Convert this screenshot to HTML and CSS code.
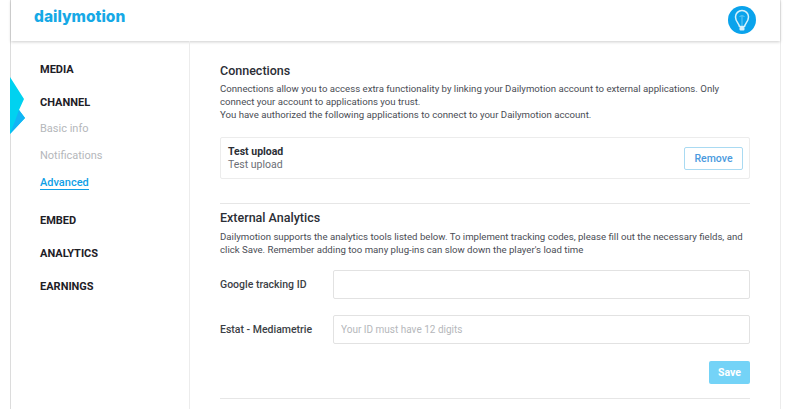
FILE: index.html
```html
<!DOCTYPE html>
<html lang="en">
<head>
<meta charset="utf-8">
<title>Dailymotion – Advanced</title>
<link rel="stylesheet" href="styles.css">
</head>
<body>
<div class="shell">
  <header class="topbar">
    <span class="logo">dailymotion</span>
    <svg class="bulb" viewBox="0 0 28 28" width="28" height="28" aria-hidden="true">
      <circle cx="14" cy="14" r="14" fill="#0aa3ec"/>
      <path d="M11.400 20.500c-.3-3-3.900-5-3.900-9.500a6.500 6.500 0 0 1 13 0c0 4.500-3.600 6.500-3.900 9.500z" fill="none" stroke="#d5f1fc" stroke-width="1.500" stroke-linejoin="round"/>
      <path d="M11.500 10.500q2.500-1.800 5 0M14 10v10" fill="none" stroke="#7fd0f4" stroke-width=".8"/>
      <rect x="11.500" y="21" width="5" height="3.400" rx="1" fill="#d5f1fc"/>
    </svg>
  </header>
  <div class="body">
    <svg class="marker" viewBox="0 0 16 57" width="16" height="57" aria-hidden="true">
      <path d="M0 0L14 22L9 33L15 41L0 57z" fill="#00d2f0"/>
      <path d="M9 33L15 41L0 57L5 44z" fill="#12b4f5"/>
    </svg>
    <nav class="side">
      <a class="head first">MEDIA</a>
      <a class="head">CHANNEL</a>
      <a class="sub one">Basic info</a>
      <a class="sub two">Notifications</a>
      <a class="sub active">Advanced</a>
      <a class="head embed">EMBED</a>
      <a class="head">ANALYTICS</a>
      <a class="head">EARNINGS</a>
    </nav>
    <main class="content">
      <h2>Connections</h2>
      <p class="text">Connections allow you to access extra functionality by linking your Dailymotion account to external applications. Only connect your account to applications you trust.<br>You have authorized the following applications to connect to your Dailymotion account.</p>
      <div class="app">
        <div class="app-text"><strong>Test upload</strong><span>Test upload</span></div>
        <button class="remove" type="button">Remove</button>
      </div>
      <hr class="rule first-rule">
      <h2>External Analytics</h2>
      <p class="text lower">Dailymotion supports the analytics tools listed below. To implement tracking codes, please fill out the necessary fields, and click Save. Remember adding too many plug-ins can slow down the player's load time</p>
      <div class="field google">
        <label for="ga">Google tracking ID</label>
        <input id="ga" type="text">
      </div>
      <div class="field">
        <label for="estat">Estat - Mediametrie</label>
        <input id="estat" type="text" placeholder="Your ID must have 12 digits">
      </div>
      <div class="actions"><button class="save" type="button">Save</button></div>
      <hr class="rule">
    </main>
  </div>
</div>
</body>
</html>
```
FILE: styles.css
```css
* { box-sizing: border-box; }
html, body { margin: 0; height: 409px; overflow: hidden; background: #fff; }
body { font-family: "Roboto", "Liberation Sans", sans-serif; color: #4a4d55; }
.shell { margin-left: 10px; width: 771px; height: 409px; border-left: 1px solid #dcdcdc; border-right: 1px solid #ececec; }
.topbar { height: 41px; display: flex; align-items: center; justify-content: space-between; padding: 0 24px 0 23px; background: #fff; box-shadow: 0 1px 3px rgba(0,0,0,.2); position: relative; }
.logo { font-family: "Inter", sans-serif; font-size: 15.500px; font-weight: 800; color: #16a9e6; position: relative; top: -4px; }
.bulb { position: relative; top: -1px; }
.body { display: flex; position: relative; height: 368px; }
.marker { position: absolute; left: -1px; top: 36px; }
.side { width: 179px; border-right: 1px solid #ececec; padding: 22px 0 0 29px; display: flex; flex-direction: column; align-items: flex-start; }
.side a { display: block; line-height: 14px; }
.head { font-size: 11px; font-weight: 700; color: #1d2026; margin-bottom: 19px; }
.sub { font-size: 11px; color: #b5b7bb; }
.one { margin-top: -7px; }
.two { margin-top: 13px; }
.active { margin-top: 13px; color: #0f9fe6; font-weight: 500; border-bottom: 1px solid #0f9fe6; line-height: 13px !important; }
.embed { margin-top: 24px; }
.content { width: 530px; margin-left: 30px; padding-top: 22px; }
h2 { margin: 0; font-size: 12.500px; line-height: 15px; font-weight: 500; color: #2b2e35; }
.text { margin: 4px 0 0; font-size: 9.650px; line-height: 13px; color: #4a4d55; }
.lower { margin-top: 5px; }
.app { margin-top: 16px; height: 42px; border: 1px solid #ececec; border-radius: 2px; display: flex; align-items: center; justify-content: space-between; padding: 0 6px 0 7px; }
.app-text { display: flex; flex-direction: column; font-size: 10.500px; line-height: 13px; color: #6b6e75; }
.app-text strong { color: #2b2e35; font-weight: 700; }
.remove { width: 59px; height: 23px; background: #fff; border: 1px solid #a9daf2; border-radius: 2px; color: #4a9ade; font: 500 10.500px "Roboto", sans-serif; padding: 0; }
.rule { margin: 0; border: 0; border-top: 1px solid #e6e6e6; }
.first-rule { margin: 24px 0 6px; }
.field { display: flex; align-items: center; height: 29px; margin-top: 16px; }
.google { margin-top: 14px; }
.field label { width: 113px; font-size: 10.500px; font-weight: 500; color: #3c3f46; }
.field input { flex: 1; height: 29px; border: 1px solid #e2e2e2; border-radius: 2px; padding: 0 7px; font: 10px "Roboto", sans-serif; background: #fff; }
.field input::placeholder { color: #b5b7bb; opacity: 1; }
.actions { display: flex; justify-content: flex-end; margin-top: 17px; }
.save { width: 41px; height: 23px; border: 0; border-radius: 2px; background: #74d3f7; color: #fff; font: 700 10.500px "Roboto", sans-serif; padding: 0; }
.actions + .rule { margin-top: 14px; }
```
